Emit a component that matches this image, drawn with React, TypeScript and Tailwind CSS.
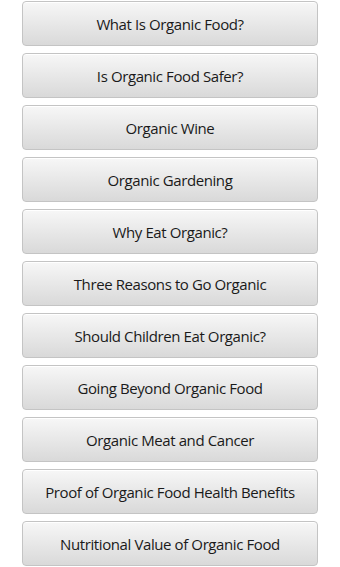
import React from "react";

const items = [
  "What Is Organic Food?",
  "Is Organic Food Safer?",
  "Organic Wine",
  "Organic Gardening",
  "Why Eat Organic?",
  "Three Reasons to Go Organic",
  "Should Children Eat Organic?",
  "Going Beyond Organic Food",
  "Organic Meat and Cancer",
  "Proof of Organic Food Health Benefits",
  "Nutritional Value of Organic Food",
];

export default function App() {
  return (
    <div className="w-[340px] h-[567px] overflow-hidden bg-white pt-px" style={{ fontFamily: '"Open Sans", "Noto Sans", sans-serif' }}>
      <div className="flex flex-col gap-[7px] pl-[22px] pr-[22px]">
        {items.map((t) => (
          <div
            key={t}
            className="h-[45px] w-[296px] shrink-0 rounded-[4px] border border-[#c4c4c4] bg-gradient-to-b from-[#f7f7f7] to-[#d9d9d9] flex items-center justify-center pt-px text-[15px] tracking-[-0.4px] text-[#1a1a1a] shadow-[inset_0_1px_0_#ffffff]"
          >
            {t}
          </div>
        ))}
      </div>
    </div>
  );
}
